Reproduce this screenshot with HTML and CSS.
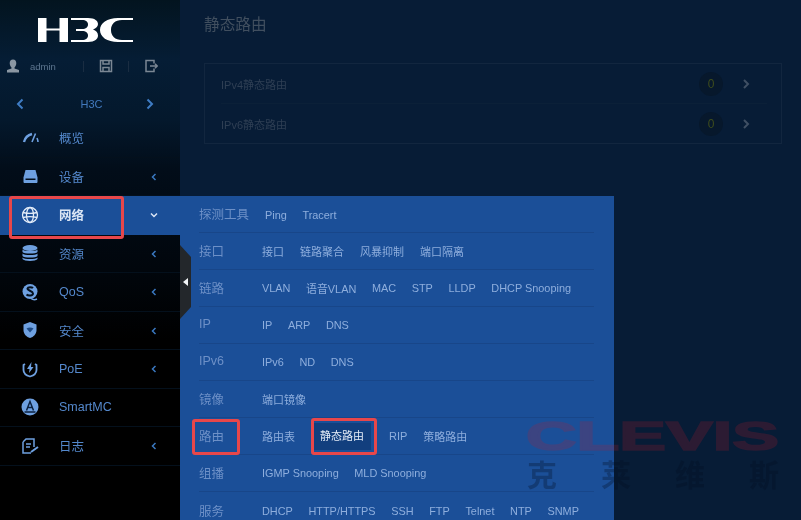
FILE: index.html
```html
<!DOCTYPE html>
<html lang="zh">
<head>
<meta charset="utf-8">
<title>静态路由</title>
<link rel="stylesheet" href="styles.css">
</head>
<body>
<div class="app">
  <aside class="sidebar">
    <div class="logo">
      <svg class="logo-svg" viewBox="0 0 96 24" width="96" height="24"><g fill="#fff"><path d="M0 0h8.500v10.500H21.500V0H30v24H21.500V12.500H8.500V24H0z"/><path d="M33 0H50C57 0 60 3 60 6C60 8.500 58 10.500 55 11.500C58 12.500 60 14.500 60 17.500C60 21 57 24 50 24H33V22H44C48 22 50 20 50 17.500C50 15 48 13 44 13H38V11H44C48 11 50 9 50 6.500C50 4 48 2 44 2H33Z"/><path d="M95 0V2H84C77 2 73 6 73 12C73 18 77 22 84 22H95V24H80C69 24 62 19 62 12C62 5 69 0 80 0Z"/></g></svg>
    </div>
    <div class="user">
      <svg class="u-icon" viewBox="0 0 14 14" width="14" height="14"><path fill="#8b97a3" d="M7 0.500c2.200 0 3.300 1.600 3.300 3.800S9 8 8.500 8.500V9.500l4.500 1.500v2.500H1v-2.500l4.500-1.500V8.500C5 8 3.700 6.500 3.700 4.300S4.800 0.500 7 0.500z"/></svg>
      <span class="u-name">admin</span>
      <i class="u-sep u-sep-a"></i>
      <svg class="u-act" viewBox="0 0 14 14" width="14" height="14"><path fill="none" stroke="#7b8794" stroke-width="1.500" d="M1.500 1.500h11v11h-11zM4 1.500v3.500h6V1.500M4 12.500V8.500h6v4"/></svg>
      <i class="u-sep u-sep-b"></i>
      <svg class="u-act" viewBox="0 0 14 14" width="14" height="14"><path fill="none" stroke="#7b8794" stroke-width="1.500" d="M10 4.500V1.500H2v11h8V9.500M6 7h7.500M11 4.700 13.300 7 11 9.300"/></svg>
    </div>
    <div class="switcher">
      <svg viewBox="0 0 8 12" width="8" height="12"><path class="chev-b" d="M6.500 1.500 2 6l4.500 4.500"/></svg>
      <span class="sw-name">H3C</span>
      <svg viewBox="0 0 8 12" width="8" height="12"><path class="chev-b" d="M1.500 1.500 6 6l-4.500 4.500"/></svg>
    </div>
    <nav class="nav">
      <div class="nav-row">
        <svg class="nav-ic" viewBox="0 0 18 18" width="18" height="18"><path fill="none" stroke="#6ea0e0" stroke-width="2.400" d="M3 13C4 9 7 6 11 5"/><path fill="none" stroke="#6ea0e0" stroke-width="1.600" d="M11 13 14.500 4.500M17 13C17 11.500 16.700 10.500 16 9"/></svg>
        <span class="nav-t">概览</span>
      </div>
      <div class="nav-row">
        <svg class="nav-ic" viewBox="0 0 18 18" width="18" height="18"><path fill="#6ea0e0" d="M4.500 3h10l2 7.500v4.500c0 .5-.5 1-1 1H3.500c-.5 0-1-.5-1-1v-4.500z"/><path fill="#04101e" d="M4.500 11.500h10v1.500h-10z"/></svg>
        <span class="nav-t">设备</span>
        <svg class="nav-ch" viewBox="0 0 8 10" width="8" height="10"><path d="M5.500 2 2.500 5l3 3"/></svg>
      </div>
      <div class="nav-row nav-on">
        <svg class="nav-ic" viewBox="0 0 18 18" width="18" height="18"><g fill="none" stroke="#e3ecf8" stroke-width="1.300"><circle cx="9" cy="9" r="7.500"/><ellipse cx="9" cy="9" rx="3.500" ry="7.500"/><path d="M2 6.500c4 1 10 1 14 0M2 11.500c4-1 10-1 14 0"/></g></svg>
        <span class="nav-t">网络</span>
        <svg class="nav-ch" viewBox="0 0 10 8" width="10" height="8"><path d="M2 2.500l3 3 3-3"/></svg>
      </div>
      <div class="nav-row">
        <svg class="nav-ic" viewBox="0 0 18 18" width="18" height="18"><g fill="#6ea0e0"><ellipse cx="9" cy="4" rx="7.500" ry="3"/><path d="M1.500 5.500C3 7.500 15 7.500 16.500 5.500V8C15 10 3 10 1.500 8zM1.500 9.500C3 11.500 15 11.500 16.500 9.500V12C15 14 3 14 1.500 12zM1.500 13.500C3 15.500 15 15.500 16.500 13.500V15C15 17.500 3 17.500 1.500 15z"/></g></svg>
        <span class="nav-t">资源</span>
        <svg class="nav-ch" viewBox="0 0 8 10" width="8" height="10"><path d="M5.500 2 2.500 5l3 3"/></svg>
      </div>
      <div class="nav-row">
        <svg class="nav-ic" viewBox="0 0 18 18" width="18" height="18"><circle cx="9" cy="8.500" r="7.500" fill="#6ea0e0"/><path fill="none" stroke="#04101e" stroke-width="2" d="M12 5c-1-1-5-1.500-5.500.5S12 8 12 10.500 7 13 5.500 11.500"/><path fill="none" stroke="#6ea0e0" stroke-width="1.500" d="M10 15.500c2 1.500 4 1.500 6 .5"/></svg>
        <span class="nav-t">QoS</span>
        <svg class="nav-ch" viewBox="0 0 8 10" width="8" height="10"><path d="M5.500 2 2.500 5l3 3"/></svg>
      </div>
      <div class="nav-row">
        <svg class="nav-ic" viewBox="0 0 18 18" width="18" height="18"><path fill="#6ea0e0" d="M9 1 15.500 3.500V9c0 4-3 7-6.500 8C5.500 16 2.500 13 2.500 9V3.500z"/><path fill="#1d4a85" d="M5.500 7.500C7.500 6 10.500 6 12.500 7.500L9 11.500z"/></svg>
        <span class="nav-t">安全</span>
        <svg class="nav-ch" viewBox="0 0 8 10" width="8" height="10"><path d="M5.500 2 2.500 5l3 3"/></svg>
      </div>
      <div class="nav-row">
        <svg class="nav-ic" viewBox="0 0 18 18" width="18" height="18"><path fill="none" stroke="#6ea0e0" stroke-width="1.800" d="M4 4 2.500 5v5c0 3 3 5.500 6.500 6.500 3.500-1 6.500-3.500 6.500-6.500V5L14 4"/><path fill="#6ea0e0" d="M10.500 2 6 9h2.500L8 13l4.500-6H10z"/></svg>
        <span class="nav-t">PoE</span>
        <svg class="nav-ch" viewBox="0 0 8 10" width="8" height="10"><path d="M5.500 2 2.500 5l3 3"/></svg>
      </div>
      <div class="nav-row">
        <svg class="nav-ic" viewBox="0 0 18 18" width="18" height="18"><circle cx="9" cy="9" r="8.500" fill="#6ea0e0"/><path fill="none" stroke="#0b2140" stroke-width="1.500" d="M5.500 12.500 9 3.500l3.500 9M7 9.500h4M3.500 14h11"/></svg>
        <span class="nav-t">SmartMC</span>
      </div>
      <div class="nav-row">
        <svg class="nav-ic" viewBox="0 0 18 18" width="18" height="18"><path fill="none" stroke="#6ea0e0" stroke-width="1.500" d="M2 5 5 2h8v8M2 5v11h8M5 7h5M5 10h4"/><path fill="none" stroke="#6ea0e0" stroke-width="2" d="M10 15l7-5"/></svg>
        <span class="nav-t">日志</span>
        <svg class="nav-ch" viewBox="0 0 8 10" width="8" height="10"><path d="M5.500 2 2.500 5l3 3"/></svg>
      </div>
    </nav>
  </aside>
  <main class="main">
    <h1 class="title">静态路由</h1>
    <section class="panel">
      <div class="p-row p-first"><span class="p-name">IPv4静态路由</span><span class="p-num">0</span><svg class="p-ch" viewBox="0 0 10 12" width="10" height="12"><path d="M3 2l4 4-4 4"/></svg></div>
      <div class="p-row"><span class="p-name">IPv6静态路由</span><span class="p-num">0</span><svg class="p-ch" viewBox="0 0 10 12" width="10" height="12"><path d="M3 2l4 4-4 4"/></svg></div>
    </section>
  </main>
  <div class="menu">
    <div class="m-row m-ping"><span class="m-label">探测工具</span><span>Ping</span><span>Tracert</span></div>
    <div class="m-row m-cjk"><span class="m-label">接口</span><span>接口</span><span>链路聚合</span><span>风暴抑制</span><span>端口隔离</span></div>
    <div class="m-row"><span class="m-label">链路</span><span>VLAN</span><span>语音VLAN</span><span>MAC</span><span>STP</span><span>LLDP</span><span>DHCP Snooping</span></div>
    <div class="m-row"><span class="m-label">IP</span><span>IP</span><span>ARP</span><span>DNS</span></div>
    <div class="m-row"><span class="m-label">IPv6</span><span>IPv6</span><span>ND</span><span>DNS</span></div>
    <div class="m-row m-cjk"><span class="m-label">镜像</span><span>端口镜像</span></div>
    <div class="m-row m-cjk"><span class="m-label">路由</span><span>路由表</span><span class="m-sel">静态路由</span><span>RIP</span><span>策略路由</span></div>
    <div class="m-row"><span class="m-label">组播</span><span>IGMP Snooping</span><span>MLD Snooping</span></div>
    <div class="m-row m-last"><span class="m-label">服务</span><span>DHCP</span><span>HTTP/HTTPS</span><span>SSH</span><span>FTP</span><span>Telnet</span><span>NTP</span><span>SNMP</span></div>
  </div>
  <div class="handle"><i class="handle-tri"></i></div>
  <div class="mark mark-net"></div>
  <div class="mark mark-route"></div>
  <div class="mark mark-static"></div>
  <div class="wm">
    <div class="wm-en"><span class="wm-en-t">CLEVIS</span></div>
    <div class="wm-cn"><span>克</span><span>莱</span><span>维</span><span>斯</span></div>
  </div>
</div>
</body>
</html>
```
FILE: styles.css
```css
* { box-sizing: border-box; }
html, body { margin: 0; padding: 0; background: #071c36; overflow: hidden; }
body { width: 801px; height: 520px; font-family: "Liberation Sans", "Noto Sans CJK SC", sans-serif; }
.app { position: relative; display: flex; width: 801px; height: 520px; overflow: hidden; background: #071c36; filter: blur(0.6px); }

/* sidebar */
.sidebar { width: 180px; height: 520px; flex: none; display: flex; flex-direction: column;
  background: linear-gradient(180deg, #03141f 0, #051d35 60px, #04182c 120px, #020d19 170px, #01060c 270px, #000 340px); }
.logo { height: 48px; padding: 18px 0 0 38px; }
.logo-svg { display: block; }
.user { height: 38px; padding: 0 0 2px 6px; display: flex; align-items: center; }
.u-icon { margin-right: 10px; }
.u-name { font-size: 9.5px; color: #5d7690; width: 53px; }
.u-sep { display: block; width: 1px; height: 11px; background: #1a2d42; }
.u-sep-a { margin-right: 15px; }
.u-sep-b { margin: 0 15px; }
.u-act { flex: none; }
.switcher { height: 33px; padding: 3px 26px 0 16px; display: flex; align-items: center; justify-content: space-between; }
.sw-name { font-size: 11px; color: #4279bd; margin-left: 13px; }
.chev-b { fill: none; stroke: #3f7cc4; stroke-width: 2; }
.nav { display: flex; flex-direction: column; }
.nav-row { height: 38.5px; padding: 0 0 0 21px; display: flex; align-items: center; position: relative; border-bottom: 1px solid #04101c; }
.nav-ic { flex: none; margin-right: 20px; }
.nav-t { font-size: 12.5px; color: #5488cc; }
.nav-ch { position: absolute; left: 150px; top: 14px; fill: none; stroke: #3a78c0; stroke-width: 1.500; }
.nav-on { background: #1b4f98; border-bottom: 0; }
.nav-on .nav-t { color: #dbe6f5; font-weight: bold; margin-top: -2px; }
.nav-on .nav-ch { stroke: #dbe6f5; top: 15px; left: 149px; }

/* main */
.main { flex: 1; padding: 16px 20px 0 24px; background: #071c36; }
.title { margin: 0; font-size: 15.7px; line-height: 18px; font-weight: normal; color: #414f5f; }
.panel { margin-top: 29px; width: 578px; height: 81px; padding: 0 14px 0 16px; border: 1px solid #12263f; }
.p-row { height: 39.5px; padding-top: 1px; display: flex; align-items: center; }
.p-first { border-bottom: 1px solid #0b2038; }
.p-name { font-size: 11px; color: #2f3f54; flex: 1; }
.p-num { width: 24px; height: 24px; line-height: 24px; border-radius: 50%; text-align: center; font-size: 12px; color: #3f4d1c; background: #07182c; margin-right: 18px; }
.p-ch { fill: none; stroke: #3f4f63; stroke-width: 2; margin-right: 16px; }

/* overlay menu */
.menu { position: absolute; left: 180px; top: 196px; width: 434px; height: 324px; background: #1b4f98; padding: 0 20px 0 19px; }
.m-row { height: 37px; display: flex; align-items: center; gap: 15.6px; padding-left: 63px; position: relative; font-size: 10.9px; color: #8eaedd; border-bottom: 1px solid #184689; white-space: nowrap; }
.m-cjk { font-size: 11px; gap: 16px; }
.m-last { border-bottom: 0; }
.m-ping { padding-left: 66px; padding-top: 1px; }
.m-label { position: absolute; left: 0; top: 50%; transform: translateY(-54%); font-size: 12.5px; color: #6d90c7; }
.m-sel { color: #e4ecf7; background: #123f7e; line-height: 27px; padding: 0 7px; margin: 0 2px; }

.handle { position: absolute; left: 180px; top: 245px; width: 11px; height: 74px; background: #23272b;
  clip-path: polygon(0 0, 100% 12px, 100% 62px, 0 100%); }
.handle-tri { position: absolute; left: 3px; top: 33px; border: 4px solid transparent; border-left: 0; border-right: 5px solid #f2f4f6; }

.mark { position: absolute; border: 3px solid #e8474a; border-radius: 3px; }
.mark-net { left: 9px; top: 196px; width: 115px; height: 43px; }
.mark-route { left: 192px; top: 419px; width: 48px; height: 36px; }
.mark-static { left: 311px; top: 418px; width: 66px; height: 37px; }

.wm { position: absolute; left: 526px; top: 414px; width: 254px; }
.wm-en { height: 44px; line-height: 44px; opacity: 0.2; }
.wm-en-t { display: inline-block; font-size: 40px; font-weight: bold; line-height: 44px; color: #be1928; -webkit-text-stroke: 1.6px #be1928; transform: scaleX(1.75); transform-origin: 0 50%; }
.wm-cn { display: flex; justify-content: space-between; padding: 0 1px; margin-top: 0; font-size: 30px; line-height: 36px; font-weight: bold; color: rgba(3, 14, 32, 0.3); }
```
